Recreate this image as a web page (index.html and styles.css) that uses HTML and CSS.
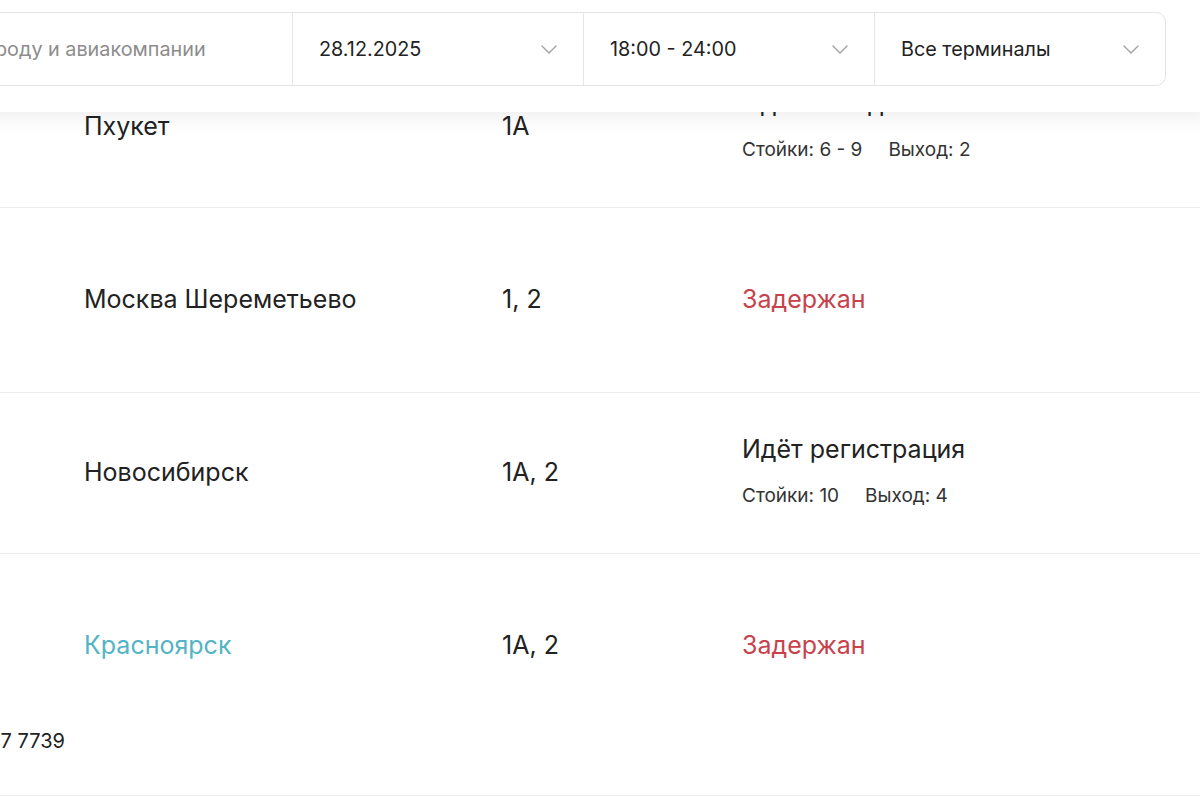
FILE: index.html
```html
<!DOCTYPE html>
<html lang="ru">
<head>
<meta charset="utf-8">
<title>Табло вылета</title>
<link rel="stylesheet" href="styles.css">
</head>
<body>
<div class="page">
  <header class="topbar">
    <div class="filters">
      <div class="filter filter--search">
        <span class="placeholder">Поиск по номеру рейса, городу и авиакомпании</span>
      </div>
      <div class="filter">
        <span>28.12.2025</span>
        <svg class="chevron" width="16" height="9" viewBox="0 0 16 9"><polyline points="1,1 8,8 15,1" fill="none" stroke="#a0a0a0" stroke-width="1.4" stroke-linecap="round" stroke-linejoin="round"/></svg>
      </div>
      <div class="filter">
        <span>18:00 - 24:00</span>
        <svg class="chevron" width="16" height="9" viewBox="0 0 16 9"><polyline points="1,1 8,8 15,1" fill="none" stroke="#a0a0a0" stroke-width="1.4" stroke-linecap="round" stroke-linejoin="round"/></svg>
      </div>
      <div class="filter">
        <span>Все терминалы</span>
        <svg class="chevron" width="16" height="9" viewBox="0 0 16 9"><polyline points="1,1 8,8 15,1" fill="none" stroke="#a0a0a0" stroke-width="1.4" stroke-linecap="round" stroke-linejoin="round"/></svg>
      </div>
    </div>
  </header>

  <main class="board">
    <div class="row row--short">
      <div class="flight"><span class="time">18:40</span><span class="code">FV 6357</span></div>
      <div class="city">Пхукет</div>
      <div class="term">1А</div>
      <div class="status status--details">
        <div class="status-main">Идёт посадка</div>
        <div class="status-sub"><span>Стойки: 6 - 9</span><span>Выход: 2</span></div>
      </div>
    </div>

    <div class="row row--tall">
      <div class="flight"><span class="time">19:15</span><span class="code">SU 1471</span></div>
      <div class="city">Москва Шереметьево</div>
      <div class="term">1, 2</div>
      <div class="status"><div class="status-main status-main--delayed">Задержан</div></div>
    </div>

    <div class="row row--short">
      <div class="flight"><span class="time">20:30</span><span class="code">S7 5204</span></div>
      <div class="city">Новосибирск</div>
      <div class="term">1А, 2</div>
      <div class="status status--details">
        <div class="status-main">Идёт регистрация</div>
        <div class="status-sub"><span>Стойки: 10</span><span>Выход: 4</span></div>
      </div>
    </div>

    <div class="row row--note">
      <div class="flight"><span class="time">22:10</span><span class="code">KV 225</span></div>
      <div class="city city--link">Красноярск</div>
      <div class="term">1А, 2</div>
      <div class="status"><div class="status-main status-main--delayed">Задержан</div></div>
      <div class="note">+7 391 227 7739</div>
    </div>
  </main>
</div>
</body>
</html>
```

FILE: styles.css
```css
html, body {
  margin: 0;
  padding: 0;
}

body {
  width: 1200px;
  height: 797px;
  overflow: hidden;
  background: #ffffff;
  font-family: Inter, "Noto Sans", sans-serif;
  color: #222222;
}

.page {
  position: relative;
  margin-left: -310px;
  width: 1520px;
}

/* sticky filter header, lies over the board */
.topbar {
  position: absolute;
  top: 0;
  left: 0;
  right: 0;
  z-index: 2;
  height: 112px;
  padding-top: 12px;
  box-sizing: border-box;
  background: #ffffff;
  box-shadow: 0 6px 18px rgba(0, 0, 0, 0.065);
}

.filters {
  display: flex;
  width: 1476px;
  height: 74px;
  box-sizing: border-box;
  border: 1px solid #e4e4e4;
  border-radius: 10px;
  background: #ffffff;
}

.filter {
  display: flex;
  align-items: center;
  justify-content: space-between;
  width: 291px;
  padding: 0 26px 0 26px;
  box-sizing: border-box;
  border-left: 1px solid #e6e6e6;
  font-size: 19.8px;
  color: #222222;
}

.filter--search {
  flex: 1;
  border-left: 0;
  justify-content: flex-start;
  padding-left: 41px;
}

.placeholder {
  color: #8c8c8c;
  white-space: nowrap;
}

.chevron {
  display: block;
  flex: none;
}

/* board */
.board {
  padding-top: 47px;
}

.row {
  display: grid;
  grid-template-columns: 394px 418px 240px 1fr;
  align-items: center;
  box-sizing: border-box;
  border-bottom: 1px solid #ececec;
  font-size: 25px;
  line-height: 30px;
}

.row--short {
  height: 161px;
  padding-bottom: 3px;
}

.row--tall {
  height: 185px;
  padding-bottom: 2px;
}

.row--note {
  height: 242px;
  grid-template-rows: 182px auto;
  align-items: start;
  align-content: start;
}

.row--note > .flight,
.row--note > .city,
.row--note > .term,
.row--note > .status {
  align-self: center;
}

.flight {
  display: flex;
  gap: 40px;
  padding-left: 20px;
  width: 260px;
}

.city {
  color: #222222;
}

.city--link {
  color: #52b4c5;
}

.status--details {
  padding-bottom: 3px;
}

.status-main {
  line-height: 30px;
}

.status-main--delayed {
  color: #c8424b;
}

.status-sub {
  display: flex;
  gap: 26px;
  margin-top: 21px;
  font-size: 19px;
  line-height: 22px;
  color: #333333;
}

.note {
  grid-column: 1;
  grid-row: 2;
  margin-top: -6px;
  padding-right: 19px;
  text-align: right;
  font-size: 20px;
  line-height: 22px;
  color: #222222;
}
```
